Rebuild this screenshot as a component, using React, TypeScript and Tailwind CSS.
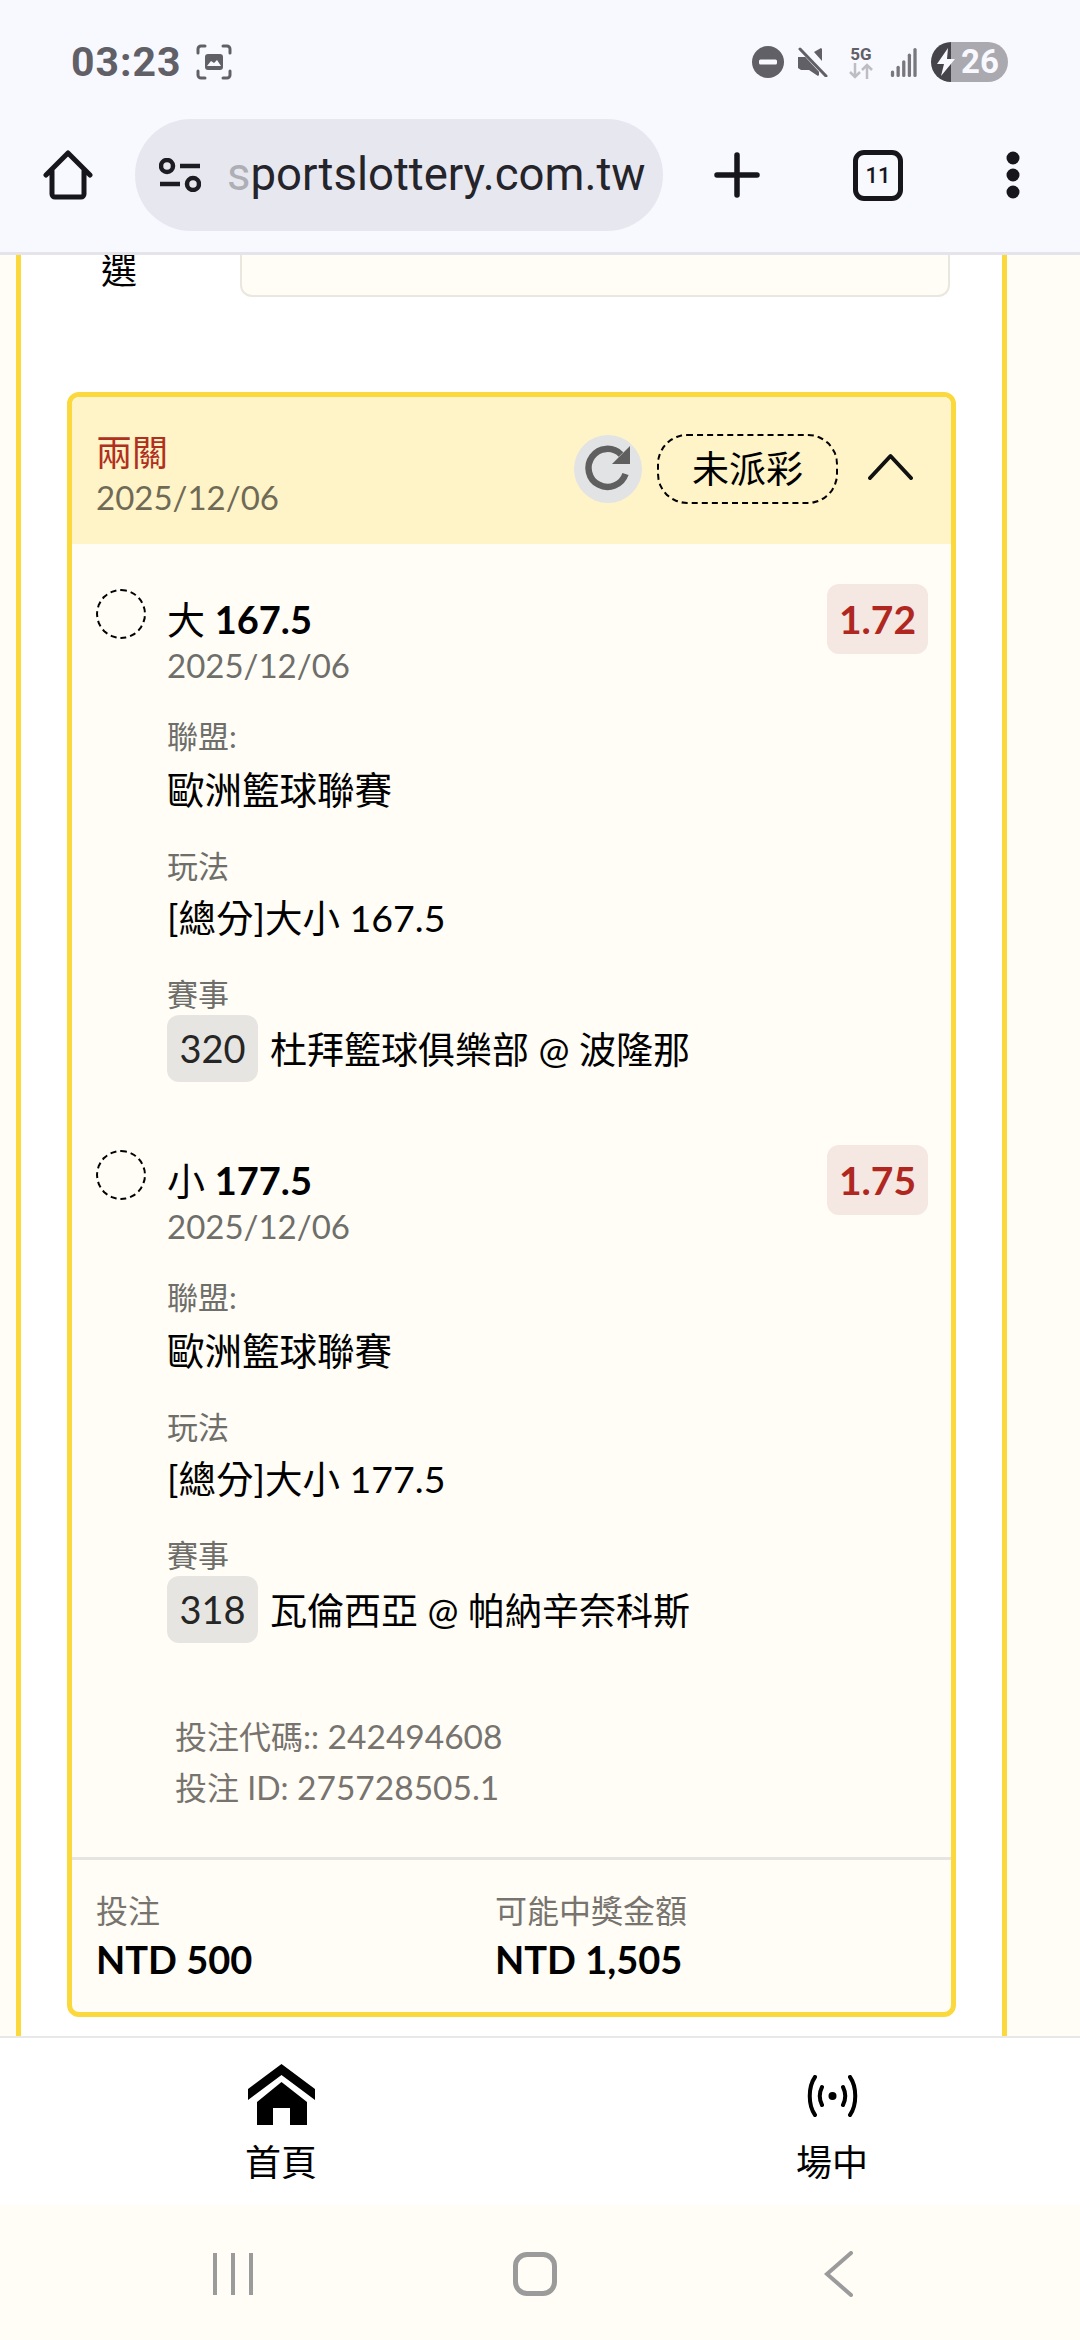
const lato = "font-['Lato','Noto_Sans_CJK_TC',sans-serif]";

function StatusBar() {
  return (
    <div className="h-[119px] flex items-start justify-between pl-[71px] pr-[72px] pt-[40px] font-['Roboto',sans-serif]">
      <div className="flex items-center gap-[14px] h-[44px]">
        <span className="text-[41px] leading-[44px] font-bold tracking-[1px] text-[#606066]">03:23</span>
        <svg width="36" height="36" viewBox="0 0 36 36" fill="none">
          <path d="M2 9V5a3 3 0 0 1 3-3h4M27 2h4a3 3 0 0 1 3 3v4M34 27v4a3 3 0 0 1-3 3h-4M9 34H5a3 3 0 0 1-3-3v-4" stroke="#606066" strokeWidth="3" strokeLinecap="round" />
          <rect x="9" y="10" width="18" height="16" rx="3" fill="#606066" />
          <path d="M11 22l4-5 3 2 3-3 4 6z" fill="#f8f8ff" />
        </svg>
      </div>
      <div className="flex items-center h-[40px] mt-[2px]">
        <svg width="32" height="32" viewBox="0 0 32 32" className="mr-[14px]">
          <circle cx="16" cy="16" r="16" fill="#606066" />
          <rect x="7" y="13.5" width="18" height="5" rx="1.5" fill="#f8f8ff" />
        </svg>
        <svg width="30" height="30" viewBox="0 0 30 30" className="mr-[20px]">
          <path d="M0 10h6l3 0 12 13v5l-1 1-9-6H3l-3-2zM16 5l7-4 1 1v12z" fill="#606066" />
          <path d="M3 1l26 28" stroke="#f8f8ff" strokeWidth="6" />
          <path d="M2 2l26 27" stroke="#606066" strokeWidth="3" strokeLinecap="round" />
        </svg>
        <div className="flex flex-col items-center w-[26px] mr-[16px]">
          <span className="text-[17px] leading-[17px] font-bold text-[#606066]">5G</span>
          <svg width="26" height="16" viewBox="0 0 26 16" fill="none" stroke="#bdbdc3" strokeWidth="2.5">
            <path d="M7 0v14M2 9l5 5 5-5M19 16V2M14 7l5-5 5 5" />
          </svg>
        </div>
        <svg width="28" height="30" viewBox="0 0 28 32" fill="#77777d" className="mr-[13px]">
          <rect x="0" y="25" width="3.5" height="7" rx="1.7" />
          <rect x="6" y="20" width="3.5" height="12" rx="1.7" />
          <rect x="12" y="14" width="3.5" height="18" rx="1.7" />
          <rect x="18" y="7" width="3.5" height="25" rx="1.7" />
          <rect x="24" y="1" width="3.5" height="31" rx="1.7" />
        </svg>
        <div className="w-[20px] h-[40px] rounded-l-[20px] relative bg-[#44444a]">
          <svg width="22" height="28" viewBox="0 0 22 28" className="absolute left-[4px] top-[6px]">
            <path d="M13 0L2 16h7L6 28 20 11h-8z" fill="#f8f8ff" />
          </svg>
        </div>
        <div className="h-[40px] w-[57px] rounded-r-[20px] bg-[#a9a9af] text-[#f8f8ff] font-bold text-[33px] leading-[40px] pl-[10px]">
          26
        </div>
      </div>
    </div>
  );
}

function Toolbar() {
  return (
    <div className="h-[136px] border-b-[3px] border-[#e4e4ea] flex items-start relative z-10 bg-[#f8f8ff]">
      <div className="w-[135px] h-[112px] flex items-center justify-center">
        <svg width="50" height="51" viewBox="0 0 50 51" fill="none" stroke="#16161c" strokeWidth="5" strokeLinecap="round" strokeLinejoin="round">
          <path d="M3 25L25 3l22 22M9 20v24a3 3 0 0 0 3 3h26a3 3 0 0 0 3-3V20" />
        </svg>
      </div>
      <div className="w-[528px] h-[112px] rounded-[56px] bg-[#e7e7ef] flex items-center pl-[24px]">
        <svg width="42" height="34" viewBox="0 0 42 34" fill="none" stroke="#1c1c22" strokeWidth="4.5" className="shrink-0">
          <circle cx="8" cy="8" r="6" />
          <path d="M21 8h20M1 26h20" />
          <circle cx="34" cy="26" r="6" />
        </svg>
        <span className="ml-[26px] text-[45.5px] leading-[56px] font-['Roboto',sans-serif] text-[#24242a] whitespace-nowrap">
          <span className="text-[#aeaeb5]">s</span>portslottery.com.tw
        </span>
      </div>
      <div className="w-[148px] h-[112px] flex items-center justify-center">
        <svg width="46" height="46" viewBox="0 0 46 46" stroke="#16161c" strokeWidth="5.5" strokeLinecap="round">
          <path d="M23 3v40M3 23h40" />
        </svg>
      </div>
      <div className="w-[134px] h-[112px] flex items-center justify-center">
        <div className="w-[50px] h-[51px] rounded-[11px] border-[5px] border-[#16161c] flex items-center justify-center font-['Roboto',sans-serif] text-[22px] font-medium text-[#16161c]">
          11
        </div>
      </div>
      <div className="w-[135px] h-[112px] flex items-center justify-center">
        <svg width="14" height="48" viewBox="0 0 14 48" fill="#16161c">
          <circle cx="7" cy="7" r="6.5" />
          <circle cx="7" cy="24" r="6.5" />
          <circle cx="7" cy="41" r="6.5" />
        </svg>
      </div>
    </div>
  );
}

function Leg({ pick, line, odds, code, market, match }: { pick: string; line: string; odds: string; code: string; market: string; match: string }) {
  return (
    <div className="flex h-[561px]">
      <div className="w-[50px] h-[50px] mt-[26px] rounded-full border-2 border-dashed border-black shrink-0" />
      <div className="ml-[21px] flex-1 pt-[31px]">
        <div className="flex justify-between">
          <div>
            <div className="text-[38px] leading-[50px] text-black">
              {pick} <span className="font-bold">{line}</span>
            </div>
            <div className="text-[33px] leading-[42px] text-[#6e6e6a]">2025/12/06</div>
          </div>
          <div className="w-[101px] h-[70px] -mt-[10px] rounded-[12px] bg-[#f5e7e1] text-[#b0271f] font-bold text-[39px] flex items-center justify-center">
            {odds}
          </div>
        </div>
        <div className="text-[31px] leading-[40px] text-[#6e6e6a] mt-[30px]">聯盟:</div>
        <div className="text-[37.5px] leading-[52px] text-black mt-[8px]">歐洲籃球聯賽</div>
        <div className="text-[31px] leading-[40px] text-[#6e6e6a] mt-[30px]">玩法</div>
        <div className="text-[37.5px] leading-[52px] text-black mt-[6px]">[總分]大小 {market}</div>
        <div className="text-[31px] leading-[40px] text-[#6e6e6a] mt-[30px]">賽事</div>
        <div className="flex items-center mt-[1px]">
          <div className="w-[91px] h-[67px] rounded-[12px] bg-[#e6e5e1] text-[38px] text-[#262626] flex items-center justify-center">{code}</div>
          <div className="ml-[12px] mt-[2px] text-[37px] text-black">{match}</div>
        </div>
      </div>
    </div>
  );
}

function BetCard() {
  return (
    <div className="mx-[46px] mt-[94px] h-[1625px] rounded-[12px] border-[5px] border-[#fbd83c] bg-[#fffdf6] overflow-hidden">
      <div className="h-[147px] bg-[#fff3c8] flex items-center justify-between pl-[24px] pr-[37px]">
        <div className="mt-[4px]">
          <div className="text-[36px] leading-[48px] text-[#b0301f]">兩關</div>
          <div className="text-[33px] leading-[42px] text-[#6f6a55]">2025/12/06</div>
        </div>
        <div className="flex items-center -mt-[3px]">
          <div className="w-[68px] h-[68px] rounded-full bg-[#e2e3e4]">
            <svg width="68" height="68" viewBox="0 0 68 68" fill="none">
              <path d="M47 19.5A19 19 0 1 0 51.5 39" stroke="#5f5f5f" strokeWidth="6.5" />
              <path d="M56 11v18H38z" fill="#5f5f5f" />
            </svg>
          </div>
          <div className="ml-[15px] w-[181px] h-[70px] rounded-[30px] border-2 border-dashed border-black flex items-center justify-center text-[37px] text-black">
            未派彩
          </div>
          <svg width="47" height="27" viewBox="0 0 47 27" fill="none" stroke="#111" strokeWidth="4" strokeLinecap="round" strokeLinejoin="round" className="ml-[29px] -mt-[6px]">
            <path d="M3 25L23.5 3 44 25" />
          </svg>
        </div>
      </div>
      <div className="pl-[24px] pr-[23px] pt-[19px]">
        <Leg pick="大" line="167.5" odds="1.72" code="320" market="167.5" match="杜拜籃球俱樂部 @ 波隆那" />
        <Leg pick="小" line="177.5" odds="1.75" code="318" market="177.5" match="瓦倫西亞 @ 帕納辛奈科斯" />
      </div>
      <div className="pl-[103px] mt-[26px] h-[146px] text-[33.5px] leading-[50px] text-[#77736e]">
        <div><span className="text-[32px]">投注代碼::</span> 242494608</div>
        <div><span className="text-[32px]">投注 ID:</span> 275728505.1</div>
      </div>
      <div className="border-t-[3px] border-[#e6e5e1] flex pl-[24px] pt-[29px]">
        <div className="w-[399px]">
          <div className="text-[32px] leading-[44px] text-[#77736e]">投注</div>
          <div className="text-[38px] leading-[52px] font-bold text-black">NTD 500</div>
        </div>
        <div>
          <div className="text-[32px] leading-[44px] text-[#77736e]">可能中獎金額</div>
          <div className="text-[38px] leading-[52px] font-bold text-black">NTD 1,505</div>
        </div>
      </div>
    </div>
  );
}

export default function App() {
  return (
    <div className={`w-[1080px] h-[2340px] flex flex-col overflow-hidden bg-[#fffdf6] ${lato}`}>
      <div className="shrink-0 bg-[#f8f8ff]">
        <StatusBar />
        <Toolbar />
      </div>

      {/* scrolled page */}
      <div className="h-[1781px] overflow-hidden shrink-0 px-[16px]">
        <div className="w-[991px] h-full border-x-[5px] border-[#fbd83c] bg-white">
          <div className="h-[43px] flex">
            <div className="w-[219px] pl-[80px] -mt-[3px] text-[36px] leading-[36px] text-black">選</div>
            <div className="w-[710px] -mt-[4px] h-[46px] border-2 border-t-0 border-[#e9e7de] rounded-b-[12px] bg-[#fffdf6]" />
          </div>
          <BetCard />
        </div>
      </div>

      <div className="h-[169px] shrink-0 bg-white border-t-[2px] border-[#e8e8e8] flex">
        <div className="w-[562px] flex flex-col items-center pt-[26px]">
          <svg width="67" height="61" viewBox="0 0 67 61" fill="#000">
            <path d="M33.5 0L67 25v11L33.5 11 0 36V25z" />
            <path d="M33.5 18L59 38v23H42V44H25v17H9V38z" />
          </svg>
          <span className="text-[36px] leading-[50px] mt-[12px] text-black">首頁</span>
        </div>
        <div className="flex-1 flex flex-col items-center pt-[26px] pl-[22px]">
          <svg width="51" height="42" viewBox="0 0 51 42" fill="none" stroke="#000" strokeWidth="4" strokeLinecap="round" className="mt-[11px] mb-[8px]">
            <circle cx="25.5" cy="21" r="4" fill="#000" stroke="none" />
            <path d="M15 12c-3 6-3 12 0 18M36 12c3 6 3 12 0 18M8 2C1 12 1 30 8 40M43 2c7 10 7 28 0 38" />
          </svg>
          <span className="text-[36px] leading-[50px] mt-[12px] text-black">場中</span>
        </div>
      </div>

      <div className="flex-1 flex items-center pt-[3px] pl-[212px]">
        <svg width="42" height="42" viewBox="0 0 42 42" stroke="#9b9b9b" strokeWidth="4">
          <path d="M3 0v42M21 0v42M39 0v42" />
        </svg>
        <div className="ml-[259px] w-[44px] h-[44px] rounded-[14px] border-[5px] border-[#9b9b9b]" />
        <svg width="30" height="46" viewBox="0 0 30 46" fill="none" stroke="#9b9b9b" strokeWidth="4" strokeLinecap="round" className="ml-[267px]">
          <path d="M27 2L3 23l24 21" />
        </svg>
      </div>
    </div>
  );
}
